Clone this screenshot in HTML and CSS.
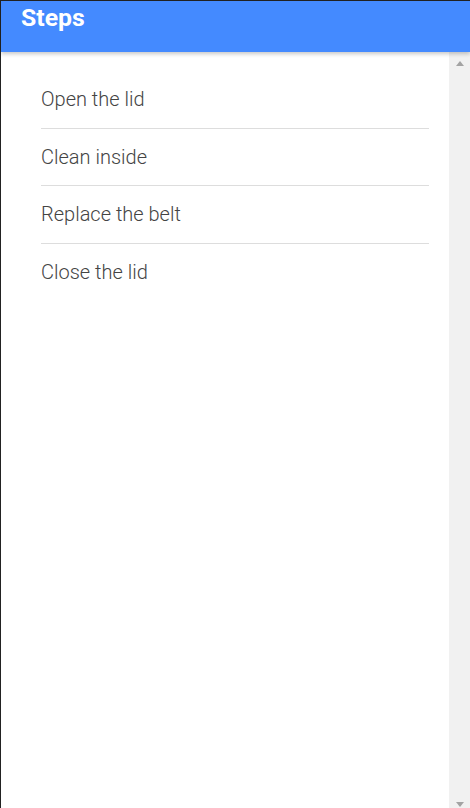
FILE: index.html
```html
<!DOCTYPE html>
<html>
<head>
<meta charset="utf-8">
<link rel="stylesheet" href="styles.css">
</head>
<body>
<div class="frame">
  <header class="appbar"><h1 class="title">Steps</h1></header>
  <div class="body-row">
    <main class="content">
      <ul class="steps">
        <li class="step">Open the lid</li>
        <li class="step">Clean inside</li>
        <li class="step">Replace the belt</li>
        <li class="step">Close the lid</li>
      </ul>
    </main>
    <div class="rail" aria-hidden="true">
      <span class="arrow arrow-up"></span>
      <span class="arrow arrow-down"></span>
    </div>
  </div>
</div>
</body>
</html>
```
FILE: styles.css
```css
html, body {
  margin: 0;
  padding: 0;
  height: 100%;
  overflow: hidden;
}
body {
  font-family: Roboto, "Liberation Sans", sans-serif;
  background: #fff;
}
.frame {
  box-sizing: border-box;
  height: 808px;
  border-top: 1px solid #222;
  border-left: 1px solid #222;
  display: flex;
  flex-direction: column;
}
.appbar {
  height: 51px;
  background: #448AFF;
  box-shadow: 0 2px 4px rgba(0,0,0,0.22);
  position: relative;
  z-index: 1;
  flex: none;
}
.title {
  margin: 0;
  padding: 3px 0 0 20px;
  color: #fff;
  font-size: 24.8px;
  font-weight: 700;
  line-height: 28px;
}
.body-row {
  flex: 1;
  display: flex;
  min-height: 0;
}
.content {
  flex: 1;
  padding-top: 19px;
}
.steps {
  list-style: none;
  margin: 0 20px 0 40px;
  padding: 0;
}
.step {
  padding: 18px 0;
  line-height: 20.5px;
  font-size: 20px;
  font-weight: 300;
  color: #444;
  border-bottom: 1px solid #ddd;
}
.step:last-child {
  border-bottom: none;
}
.rail {
  width: 21px;
  flex: none;
  background: #f1f1f1;
  display: flex;
  flex-direction: column;
  justify-content: space-between;
  align-items: center;
  padding: 9px 0 1px;
  box-sizing: border-box;
}
.arrow {
  width: 0;
  height: 0;
  border-left: 4.5px solid transparent;
  border-right: 4.5px solid transparent;
}
.arrow-up {
  border-bottom: 5px solid #a3a3a3;
}
.arrow-down {
  border-top: 5px solid #a3a3a3;
}
```
